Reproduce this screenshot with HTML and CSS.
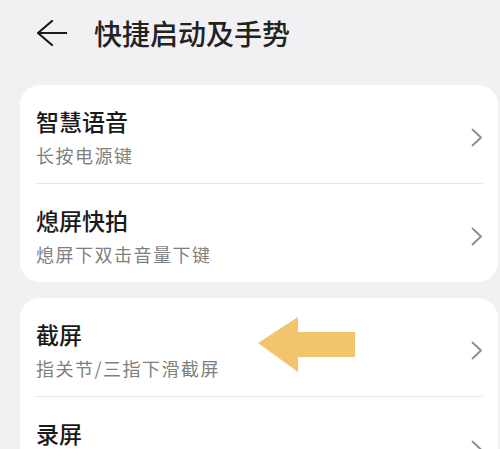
FILE: index.html
```html
<!DOCTYPE html>
<html lang="zh-CN">
<head>
  <meta charset="UTF-8">
  <meta name="viewport" content="width=device-width, initial-scale=1.0">
  <title>快捷启动及手势</title>
  <link rel="stylesheet" href="styles.css">
</head>
<body>
  <div class="header">
    <svg class="back" width="30" height="26" viewBox="0 0 30 26">
      <path d="M15 1 L1 13 L15 25 M1 13 H30" fill="none" stroke="#1a1a1a" stroke-width="2.2" stroke-linecap="round" stroke-linejoin="round"/>
    </svg>
    <h1>快捷启动及手势</h1>
  </div>

  <div class="card">
    <div class="row">
      <div class="text">
        <div class="title">智慧语音</div>
        <div class="sub">长按电源键</div>
      </div>
      <svg class="chevron" width="12" height="19" viewBox="0 0 12 19"><path d="M1.5 1.5 L10 9.5 L1.5 17.5" fill="none" stroke="#8c8c8c" stroke-width="1.8" stroke-linecap="round" stroke-linejoin="round"/></svg>
    </div>
    <div class="row">
      <div class="text">
        <div class="title">熄屏快拍</div>
        <div class="sub">熄屏下双击音量下键</div>
      </div>
      <svg class="chevron" width="12" height="19" viewBox="0 0 12 19"><path d="M1.5 1.5 L10 9.5 L1.5 17.5" fill="none" stroke="#8c8c8c" stroke-width="1.8" stroke-linecap="round" stroke-linejoin="round"/></svg>
    </div>
  </div>

  <div class="card">
    <div class="row">
      <div class="text">
        <div class="title">截屏</div>
        <div class="sub">指关节/三指下滑截屏</div>
      </div>
      <svg class="chevron" width="12" height="19" viewBox="0 0 12 19"><path d="M1.5 1.5 L10 9.5 L1.5 17.5" fill="none" stroke="#8c8c8c" stroke-width="1.8" stroke-linecap="round" stroke-linejoin="round"/></svg>
      <!-- 注釈用の矢印 -->
      <svg class="pointer" width="98" height="56" viewBox="0 0 98 56">
        <polygon points="0,26 40,0 40,15 97,15 97,40 40,40 40,55" fill="#f2c46c"/>
      </svg>
    </div>
    <div class="row">
      <div class="text">
        <div class="title">录屏</div>
        <div class="sub"></div>
      </div>
      <svg class="chevron" width="12" height="19" viewBox="0 0 12 19"><path d="M1.5 1.5 L10 9.5 L1.5 17.5" fill="none" stroke="#8c8c8c" stroke-width="1.8" stroke-linecap="round" stroke-linejoin="round"/></svg>
    </div>
  </div>
</body>
</html>
```

FILE: styles.css
```css
/* 基本スタイル */
body {
  margin: 0;
  overflow: hidden;
  background: #f1f1f3;
  font-family: "Noto Sans CJK SC", "Noto Sans", sans-serif;
  color: #1a1a1a;
}

/* ヘッダー */
.header {
  height: 66px;
  display: flex;
  align-items: center;
  padding-left: 37px;
  margin-bottom: 19px;
}

.header .back {
  display: block;
  margin-right: 27px;
}

.header h1 {
  margin: 0;
  font-size: 28px;
  font-weight: 500;
  color: #222;
}

/* カード */
.card {
  background: #fff;
  border-radius: 20px;
  margin: 0 2px 16px 20px;
  padding: 0 15px 0 16px;
}

.row {
  position: relative;
  display: flex;
  align-items: center;
  justify-content: space-between;
  padding: 21px 0 16px;
  border-bottom: 1px solid #e6e6e6;
}

.row:last-child {
  border-bottom: none;
}

.title {
  font-size: 23px;
  font-weight: 500;
  line-height: 30px;
  color: #1a1a1a;
}

.sub {
  font-size: 18px;
  letter-spacing: 1.5px;
  line-height: 24px;
  min-height: 24px;
  margin-top: 7px;
  color: #7f7f7f;
}

.chevron {
  display: block;
  flex-shrink: 0;
  margin-top: 2px;
}

.pointer {
  position: absolute;
  left: 222px;
  top: 19px;
}
```
